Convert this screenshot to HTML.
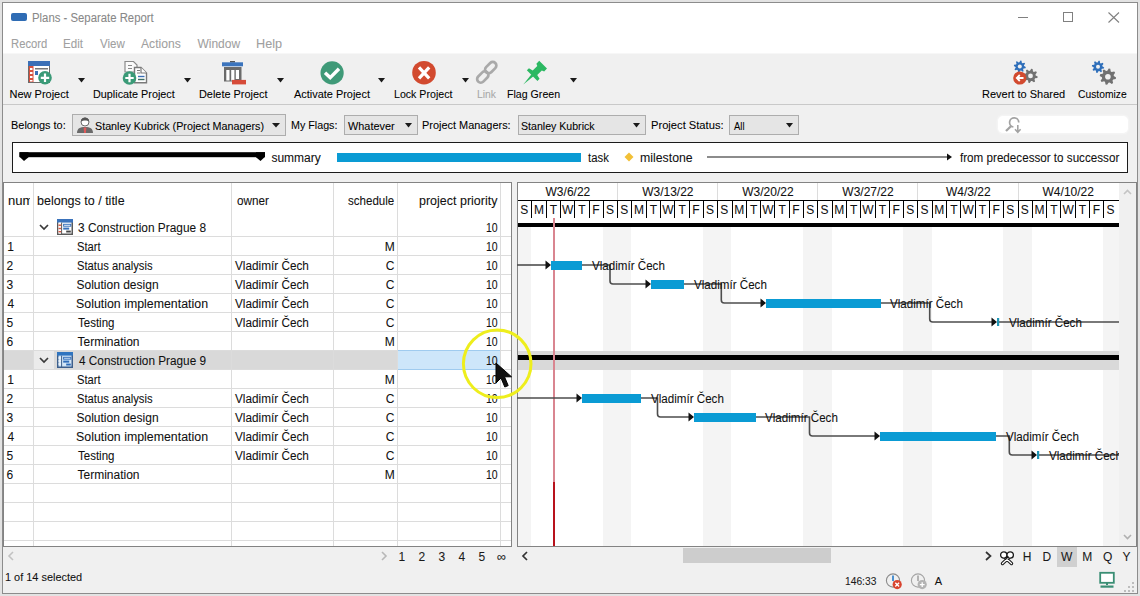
<!DOCTYPE html>
<html><head><meta charset="utf-8"><style>
html,body{margin:0;padding:0;}
body{width:1140px;height:596px;position:relative;overflow:hidden;font-family:"Liberation Sans",sans-serif;background:#e3e3e3;}
.t{position:absolute;white-space:nowrap;line-height:normal;transform-origin:0 0;-webkit-text-stroke:0.07px currentColor;}
.r{position:absolute;display:block;}
</style></head><body>
<div class="r" style="left:0px;top:0px;width:1140px;height:596px;background:#e3e3e3;"></div>
<div class="r" style="left:2px;top:2px;width:1136px;height:592px;background:#8c8c8c;"></div>
<div class="r" style="left:3px;top:3px;width:1134px;height:590px;background:#f0f0f0;"></div>
<div class="r" style="left:3px;top:3px;width:1134px;height:51px;background:#ffffff;"></div>
<div class="r" style="left:11px;top:13px;width:16px;height:8px;background:#2f6cb4;border-radius:2px;"></div>
<div class="t" style="left:32.05px;top:11px;font-size:12px;color:#888888;transform:scaleX(0.9453);">Plans - Separate Report</div>
<div class="r" style="left:1018px;top:17px;width:10px;height:1px;background:#808080;"></div>
<div class="r" style="left:1063px;top:12px;width:10px;height:10px;background:transparent;border:1px solid #808080;box-sizing:border-box;"></div>
<svg class="r" style="left:1108px;top:12px;" width="12" height="11" viewBox="0 0 12 11"><path d="M0.5 0.5L11 10.5M11 0.5L0.5 10.5" stroke="#808080" stroke-width="1.1"/></svg>
<div class="t" style="left:10.66px;top:37px;font-size:12px;color:#a0a0a0;transform:scaleX(0.9378);">Record</div>
<div class="t" style="left:63.44px;top:37px;font-size:12px;color:#a0a0a0;transform:scaleX(0.9650);">Edit</div>
<div class="t" style="left:100.00px;top:37px;font-size:12px;color:#a0a0a0;transform:scaleX(0.9615);">View</div>
<div class="t" style="left:141.20px;top:37px;font-size:12px;color:#a0a0a0;transform:scaleX(1.0103);">Actions</div>
<div class="t" style="left:197.40px;top:37px;font-size:12px;color:#a0a0a0;">Window</div>
<div class="t" style="left:256.14px;top:37px;font-size:12px;color:#a0a0a0;transform:scaleX(1.0565);">Help</div>
<div class="r" style="left:3px;top:53px;width:1134px;height:51px;background:#f0f0f0;"></div>
<div class="r" style="left:3px;top:53px;width:1134px;height:1px;background:#f7f7f7;"></div>
<div class="r" style="left:3px;top:104px;width:1134px;height:1px;background:#c9c9c9;"></div>
<svg class="r" style="left:24px;top:56px;" width="32" height="32" viewBox="0 0 32 32">
<rect x="4.5" y="5.5" width="21" height="21" fill="#fff" stroke="#6b6b6b" stroke-width="1"/>
<rect x="4" y="5" width="22" height="5" fill="#3b6fb6"/>
<rect x="5" y="10" width="4.5" height="16" fill="#d8513e"/>
<rect x="6" y="12" width="2.5" height="2" fill="#fff"/><rect x="6" y="16" width="2.5" height="2" fill="#fff"/><rect x="6" y="20" width="2.5" height="2" fill="#fff"/><rect x="6" y="24" width="2.5" height="1.5" fill="#fff"/>
<rect x="11" y="12" width="13" height="1.5" fill="#777"/>
<rect x="11" y="15" width="3" height="4" fill="#3b6fb6"/>
<circle cx="21" cy="21.8" r="6.8" fill="#3a9a77"/>
<path d="M21 17.5V26M16.8 21.8H25.2" stroke="#fff" stroke-width="2.2"/>
</svg>
<div class="t" style="left:9.50px;top:88px;font-size:11px;color:#000;">New Project</div>
<svg class="r" style="left:78px;top:78px;" width="8" height="5" viewBox="0 0 8 5"><path d="M0 0H7L3.5 4.5Z" fill="#1a1a1a"/></svg>
<svg class="r" style="left:119px;top:56px;" width="32" height="32" viewBox="0 0 32 32">
<path d="M6 5.5H14.5L18 9V16H6Z" fill="#fafafa" stroke="#8a8a8a" stroke-width="1.2"/>
<path d="M9 9.5h4M9 12.5h4" stroke="#8a8a8a" stroke-width="1.2"/>
<path d="M15.5 11.5H22L27.5 17V26.8H15.5Z" fill="#fff" stroke="#7a7a7a" stroke-width="1.4"/>
<path d="M22 11.5V17H27.5" fill="#fff" stroke="#7a7a7a" stroke-width="1.2"/>
<path d="M18 14.5h3M18 17h3" stroke="#7a7a7a" stroke-width="1.2"/>
<path d="M19 20.5h6.5" stroke="#3b6fb6" stroke-width="1.4"/>
<path d="M19 23.5h6.5" stroke="#3f6e64" stroke-width="1.4"/>
<circle cx="10.5" cy="22" r="6.8" fill="#3a9a77"/>
<path d="M10.5 17.8V26.2M6.3 22H14.7" stroke="#fff" stroke-width="2.2"/>
</svg>
<div class="t" style="left:93.02px;top:88px;font-size:11px;color:#000;transform:scaleX(0.9829);">Duplicate Project</div>
<svg class="r" style="left:184px;top:78px;" width="8" height="5" viewBox="0 0 8 5"><path d="M0 0H7L3.5 4.5Z" fill="#1a1a1a"/></svg>
<svg class="r" style="left:218px;top:56px;" width="32" height="32" viewBox="0 0 32 32">
<rect x="12" y="5" width="5" height="1.6" fill="#555"/>
<rect x="4" y="6.3" width="21" height="4" fill="#3b74bd"/>
<path d="M6 11H23.5V25.5H6Z" fill="#6b6b6b"/>
<rect x="8.3" y="14" width="3.2" height="10.5" fill="#fff"/>
<rect x="13.2" y="14" width="3.2" height="10.5" fill="#fff"/>
<rect x="17.8" y="14" width="3.2" height="9" fill="#fff"/>
<rect x="14" y="23.9" width="14" height="4.5" fill="#d64b39"/>
</svg>
<div class="t" style="left:198.61px;top:88px;font-size:11px;color:#000;transform:scaleX(0.9912);">Delete Project</div>
<svg class="r" style="left:277px;top:78px;" width="8" height="5" viewBox="0 0 8 5"><path d="M0 0H7L3.5 4.5Z" fill="#1a1a1a"/></svg>
<svg class="r" style="left:316px;top:56px;" width="32" height="32" viewBox="0 0 32 32">
<circle cx="16.1" cy="16.9" r="11.6" fill="#3f9a78"/>
<path d="M9 16.8L14.2 21.6L23 12.8" fill="none" stroke="#fff" stroke-width="3.4"/>
</svg>
<div class="t" style="left:293.50px;top:88px;font-size:11px;color:#000;transform:scaleX(0.9934);">Activate Project</div>
<svg class="r" style="left:378px;top:78px;" width="8" height="5" viewBox="0 0 8 5"><path d="M0 0H7L3.5 4.5Z" fill="#1a1a1a"/></svg>
<svg class="r" style="left:408px;top:56px;" width="32" height="32" viewBox="0 0 32 32">
<circle cx="16" cy="16.7" r="11.8" fill="#d24a2f"/>
<path d="M11 11.3L21.2 22.3M21.2 11.3L11 22.3" stroke="#fff" stroke-width="3.2"/>
</svg>
<div class="t" style="left:393.54px;top:88px;font-size:11px;color:#000;transform:scaleX(0.9650);">Lock Project</div>
<svg class="r" style="left:462px;top:78px;" width="8" height="5" viewBox="0 0 8 5"><path d="M0 0H7L3.5 4.5Z" fill="#1a1a1a"/></svg>
<svg class="r" style="left:470px;top:56px;" width="32" height="32" viewBox="0 0 32 32">
<g fill="none" stroke="#a9a9a9" stroke-width="2.7">
<rect x="14.2" y="8" width="13" height="7.2" rx="3.6" transform="rotate(-45 20.7 11.6)"/>
<rect x="6.3" y="17.4" width="13" height="7.2" rx="3.6" transform="rotate(-45 12.8 21)"/>
</g>
</svg>
<div class="t" style="left:476.56px;top:88px;font-size:11px;color:#a8a8a8;transform:scaleX(0.9421);">Link</div>
<svg class="r" style="left:519px;top:56px;" width="32" height="32" viewBox="0 0 32 32">
<polygon points="7.84,14.36 9.96,12.24 13.70,14.57 18.30,9.97 17.38,7.64 20.21,4.81 27.99,12.59 25.16,15.42 22.83,14.50 18.23,19.10 20.56,22.84 18.44,24.96" fill="#2cb862"/>
<polygon points="4.30,28.50 12.50,18.32 14.48,20.30" fill="#2cb862"/>
</svg>
<div class="t" style="left:507.44px;top:88px;font-size:11px;color:#000;transform:scaleX(0.9648);">Flag Green</div>
<svg class="r" style="left:570px;top:78px;" width="8" height="5" viewBox="0 0 8 5"><path d="M0 0H7L3.5 4.5Z" fill="#1a1a1a"/></svg>
<svg class="r" style="left:1009px;top:56px;" width="32" height="32" viewBox="0 0 32 32"><polygon points="11.39,4.53 12.54,4.76 12.83,6.71 13.53,7.18 15.44,6.69 16.09,7.67 14.91,9.25 15.08,10.08 16.77,11.09 16.54,12.24 14.59,12.53 14.12,13.23 14.61,15.14 13.63,15.79 12.05,14.61 11.22,14.78 10.21,16.47 9.06,16.24 8.77,14.29 8.07,13.82 6.16,14.31 5.51,13.33 6.69,11.75 6.52,10.92 4.83,9.91 5.06,8.76 7.01,8.47 7.48,7.77 6.99,5.86 7.97,5.21 9.55,6.39 10.38,6.22" fill="#2f6fba"/><circle cx="10.8" cy="10.5" r="2.0" fill="#f0f0f0"/><polygon points="22.21,12.73 23.59,13.01 23.95,15.31 24.80,15.88 27.07,15.33 27.85,16.51 26.48,18.39 26.67,19.39 28.67,20.61 28.39,21.99 26.09,22.35 25.52,23.20 26.07,25.47 24.89,26.25 23.01,24.88 22.01,25.07 20.79,27.07 19.41,26.79 19.05,24.49 18.20,23.92 15.93,24.47 15.15,23.29 16.52,21.41 16.33,20.41 14.33,19.19 14.61,17.81 16.91,17.45 17.48,16.60 16.93,14.33 18.11,13.55 19.99,14.92 20.99,14.73" fill="#717171"/><circle cx="21.5" cy="19.9" r="2.4" fill="#f0f0f0"/>
<circle cx="10.8" cy="22" r="6.6" fill="#d24a2f"/>
<path d="M14.5 22H7.8M10.8 19L7.8 22L10.8 25" fill="none" stroke="#fff" stroke-width="1.8"/>
</svg>
<div class="t" style="left:982.00px;top:88px;font-size:11px;color:#000;">Revert to Shared</div>
<svg class="r" style="left:1088px;top:56px;" width="32" height="32" viewBox="0 0 32 32"><polygon points="10.61,4.63 11.80,4.87 12.07,6.92 12.79,7.40 14.79,6.87 15.47,7.88 14.21,9.52 14.38,10.37 16.17,11.41 15.93,12.60 13.88,12.87 13.40,13.59 13.93,15.59 12.92,16.27 11.28,15.01 10.43,15.18 9.39,16.97 8.20,16.73 7.93,14.68 7.21,14.20 5.21,14.73 4.53,13.72 5.79,12.08 5.62,11.23 3.83,10.19 4.07,9.00 6.12,8.73 6.60,8.01 6.07,6.01 7.08,5.33 8.72,6.59 9.57,6.42" fill="#2f6fba"/><circle cx="10" cy="10.8" r="2.0" fill="#f0f0f0"/><polygon points="20.70,12.54 22.28,12.85 22.73,15.41 23.71,16.06 26.24,15.50 27.13,16.83 25.64,18.96 25.87,20.11 28.06,21.50 27.75,23.08 25.19,23.53 24.54,24.51 25.10,27.04 23.77,27.93 21.64,26.44 20.49,26.67 19.10,28.86 17.52,28.55 17.07,25.99 16.09,25.34 13.56,25.90 12.67,24.57 14.16,22.44 13.93,21.29 11.74,19.90 12.05,18.32 14.61,17.87 15.26,16.89 14.70,14.36 16.03,13.47 18.16,14.96 19.31,14.73" fill="#717171"/><circle cx="19.9" cy="20.7" r="2.8" fill="#f0f0f0"/></svg>
<div class="t" style="left:1078.06px;top:88px;font-size:11px;color:#000;transform:scaleX(0.9353);">Customize</div>
<div class="t" style="left:10.81px;top:119px;font-size:11px;color:#000;transform:scaleX(0.9943);">Belongs to:</div>
<div class="r" style="left:72px;top:114px;width:214px;height:22px;background:#e5e5e5;border:1px solid #adadad;box-sizing:border-box;"></div>
<svg class="r" style="left:75px;top:116px;" width="20" height="18" viewBox="0 0 20 18">
<path d="M2 17C2 12.5 5 11 10 11S18 12.5 18 17Z" fill="#6a6a6a"/>
<path d="M8.6 11.5L11.4 11.5L10.9 17L9.1 17Z" fill="#e05a5a"/>
<circle cx="10" cy="6" r="4" fill="#fff" stroke="#6a6a6a" stroke-width="1"/>
<path d="M6 5.5C6 2.5 8 1.5 10 1.5S14 2.5 14 5.5C12.5 4 8 4 6 5.5Z" fill="#555"/>
</svg>
<div class="t" style="left:95.02px;top:120px;font-size:11px;color:#000;transform:scaleX(0.9766);">Stanley Kubrick (Project Managers)</div>
<svg class="r" style="left:272px;top:123px;" width="9" height="5" viewBox="0 0 9 5"><path d="M0 0H8L4 4.5Z" fill="#1a1a1a"/></svg>
<div class="t" style="left:290.83px;top:119px;font-size:11px;color:#000;transform:scaleX(0.9739);">My Flags:</div>
<div class="r" style="left:344px;top:115px;width:74px;height:20px;background:#e5e5e5;border:1px solid #adadad;box-sizing:border-box;"></div>
<div class="t" style="left:348.00px;top:120px;font-size:11px;color:#000;transform:scaleX(0.9894);">Whatever</div>
<svg class="r" style="left:405px;top:123px;" width="8" height="5" viewBox="0 0 8 5"><path d="M0 0H7L3.5 4.5Z" fill="#1a1a1a"/></svg>
<div class="t" style="left:422.41px;top:119px;font-size:11px;color:#000;transform:scaleX(0.9932);">Project Managers:</div>
<div class="r" style="left:518px;top:115px;width:128px;height:20px;background:#e5e5e5;border:1px solid #adadad;box-sizing:border-box;"></div>
<div class="t" style="left:520.84px;top:120px;font-size:11px;color:#000;transform:scaleX(0.9627);">Stanley Kubrick</div>
<svg class="r" style="left:633px;top:123px;" width="8" height="5" viewBox="0 0 8 5"><path d="M0 0H7L3.5 4.5Z" fill="#1a1a1a"/></svg>
<div class="t" style="left:650.59px;top:119px;font-size:11px;color:#000;transform:scaleX(1.0143);">Project Status:</div>
<div class="r" style="left:729px;top:115px;width:70px;height:20px;background:#e5e5e5;border:1px solid #adadad;box-sizing:border-box;"></div>
<div class="t" style="left:733.70px;top:120px;font-size:11px;color:#000;transform:scaleX(0.8583);">All</div>
<svg class="r" style="left:786px;top:123px;" width="8" height="5" viewBox="0 0 8 5"><path d="M0 0H7L3.5 4.5Z" fill="#1a1a1a"/></svg>
<div class="r" style="left:998px;top:116px;width:130px;height:17px;background:#ffffff;border-radius:5px;box-shadow:0 0 1.5px 0.5px #f6f6f6;"></div>
<svg class="r" style="left:1002px;top:114px;" width="24" height="22" viewBox="0 0 24 22">
<path d="M16.8 8.5A4.6 4.6 0 1 0 11.4 13.03" fill="none" stroke="#a3a3a3" stroke-width="1.7"/>
<path d="M9.2 12L4 17" stroke="#a3a3a3" stroke-width="2.3"/>
<path d="M15.8 11V18.2M13 15.3L15.8 18.3L18.6 15.3" fill="none" stroke="#a3a3a3" stroke-width="1.6"/>
</svg>
<div class="r" style="left:12px;top:142px;width:1116px;height:31px;background:#ffffff;border:1px solid #1c1c1c;box-sizing:border-box;"></div>
<svg class="r" style="left:18px;top:150px;" width="250" height="13" viewBox="0 0 250 13">
<rect x="1.5" y="2.2" width="245.5" height="5" fill="#000"/>
<path d="M1.5 2.2H10.5V7.2L6 11L1.5 6.8Z" fill="#000"/>
<path d="M247 2.2V6.8L242.5 11L238 7.2V2.2Z" fill="#000"/>
</svg>
<div class="t" style="left:271.40px;top:151px;font-size:12px;color:#111;">summary</div>
<div class="r" style="left:337px;top:153px;width:244px;height:9px;background:#0a9bd4;"></div>
<div class="t" style="left:588.00px;top:151px;font-size:12px;color:#111;transform:scaleX(0.9455);">task</div>
<svg class="r" style="left:623px;top:151px;" width="12" height="12" viewBox="0 0 12 12"><path d="M6 1.5L10.5 6L6 10.5L1.5 6Z" fill="#f2c037"/></svg>
<div class="t" style="left:639.67px;top:151px;font-size:12px;color:#111;transform:scaleX(1.0260);">milestone</div>
<svg class="r" style="left:706px;top:152px;" width="248" height="10" viewBox="0 0 248 10"><path d="M1 5H243" stroke="#666" stroke-width="1.6"/><path d="M241 1.5L246 5L241 8.5Z" fill="#111"/></svg>
<div class="t" style="left:959.60px;top:151px;font-size:12px;color:#111;transform:scaleX(0.9707);">from predecessor to successor</div>
<div class="r" style="left:3px;top:182px;width:509px;height:365px;background:#ffffff;border:1px solid #838383;box-sizing:border-box;"></div>
<div class="r" style="left:4px;top:236px;width:507px;height:1px;background:#dcdcdc;"></div>
<div class="r" style="left:4px;top:255px;width:507px;height:1px;background:#dcdcdc;"></div>
<div class="r" style="left:4px;top:274px;width:507px;height:1px;background:#dcdcdc;"></div>
<div class="r" style="left:4px;top:293px;width:507px;height:1px;background:#dcdcdc;"></div>
<div class="r" style="left:4px;top:312px;width:507px;height:1px;background:#dcdcdc;"></div>
<div class="r" style="left:4px;top:331px;width:507px;height:1px;background:#dcdcdc;"></div>
<div class="r" style="left:4px;top:350px;width:507px;height:1px;background:#dcdcdc;"></div>
<div class="r" style="left:4px;top:369px;width:507px;height:1px;background:#dcdcdc;"></div>
<div class="r" style="left:4px;top:388px;width:507px;height:1px;background:#dcdcdc;"></div>
<div class="r" style="left:4px;top:407px;width:507px;height:1px;background:#dcdcdc;"></div>
<div class="r" style="left:4px;top:426px;width:507px;height:1px;background:#dcdcdc;"></div>
<div class="r" style="left:4px;top:445px;width:507px;height:1px;background:#dcdcdc;"></div>
<div class="r" style="left:4px;top:464px;width:507px;height:1px;background:#dcdcdc;"></div>
<div class="r" style="left:4px;top:483px;width:507px;height:1px;background:#dcdcdc;"></div>
<div class="r" style="left:4px;top:502px;width:507px;height:1px;background:#dcdcdc;"></div>
<div class="r" style="left:4px;top:521px;width:507px;height:1px;background:#dcdcdc;"></div>
<div class="r" style="left:4px;top:540px;width:507px;height:1px;background:#dcdcdc;"></div>
<div class="r" style="left:4px;top:351px;width:496px;height:18px;background:#d9d9d9;"></div>
<div class="r" style="left:34px;top:351px;width:20px;height:18px;background:#ebebeb;"></div>
<div class="r" style="left:397px;top:350px;width:104px;height:20px;background:#cde6fa;border-top:1px solid #9fcbef;border-bottom:1px solid #9fcbef;box-sizing:border-box;"></div>
<div class="r" style="left:33px;top:183px;width:1px;height:363px;background:#dcdcdc;"></div>
<div class="r" style="left:231px;top:183px;width:1px;height:363px;background:#dcdcdc;"></div>
<div class="r" style="left:333px;top:183px;width:1px;height:363px;background:#dcdcdc;"></div>
<div class="r" style="left:397px;top:183px;width:1px;height:363px;background:#dcdcdc;"></div>
<div class="r" style="left:500px;top:183px;width:1px;height:363px;background:#dcdcdc;"></div>
<div class="r" style="left:4px;top:183px;width:26px;height:30px;overflow:hidden;">
<div class="t" style="left:3.61px;top:11px;font-size:12px;color:#111;transform:scaleX(1.0909);">num</div>
</div>
<div class="t" style="left:37.46px;top:194px;font-size:12px;color:#111;transform:scaleX(1.0422);">belongs to / title</div>
<div class="t" style="left:236.70px;top:194px;font-size:12px;color:#111;transform:scaleX(0.9788);">owner</div>
<div class="t" style="left:347.50px;top:194px;font-size:12px;color:#111;transform:scaleX(0.9625);">schedule</div>
<div class="t" style="left:418.96px;top:194px;font-size:12px;color:#111;transform:scaleX(1.0405);">project priority</div>
<svg class="r" style="left:38.5px;top:223.5px;" width="10" height="7" viewBox="0 0 10 7"><path d="M1 1L5 5L9 1" fill="none" stroke="#3a3a3a" stroke-width="1.7"/></svg>
<svg class="r" style="left:57px;top:219px;" width="16" height="16" viewBox="0 0 16 16">
<rect x="0.75" y="0.75" width="14.5" height="14.5" fill="#fff" stroke="#5a5a5a" stroke-width="1.5"/>
<rect x="0" y="0" width="16" height="3.6" fill="#3a72bb"/>
<rect x="1.5" y="3.6" width="2.6" height="11" fill="#fff"/>
<rect x="1.5" y="5.5" width="2.6" height="1.4" fill="#d8553f"/><rect x="1.5" y="8.8" width="2.6" height="1.4" fill="#d8553f"/><rect x="1.5" y="12" width="2.6" height="1.4" fill="#d8553f"/>
<rect x="4.1" y="3.6" width="1" height="11.5" fill="#5a5a5a"/>
<rect x="6.6" y="5.3" width="7.2" height="1.9" fill="none" stroke="#3a72bb" stroke-width="1"/>
<rect x="6.2" y="8.6" width="6" height="2" fill="#3a72bb"/>
<rect x="9.2" y="11.6" width="4.6" height="1.9" fill="#444"/>
</svg>
<div class="t" style="left:78.41px;top:221px;font-size:12px;color:#111;transform:scaleX(0.9891);">3 Construction Prague 8</div>
<div class="t" style="left:485.62px;top:221px;font-size:12px;color:#111;transform:scaleX(0.8750);">10</div>
<div class="t" style="left:7.30px;top:240px;font-size:12px;color:#111;">1</div>
<div class="t" style="left:76.57px;top:240px;font-size:12px;color:#111;transform:scaleX(0.9333);">Start</div>
<div class="t" style="left:384.70px;top:240px;font-size:12px;color:#111;">M</div>
<div class="t" style="left:485.62px;top:240px;font-size:12px;color:#111;transform:scaleX(0.8750);">10</div>
<div class="t" style="left:6.60px;top:259px;font-size:12px;color:#111;">2</div>
<div class="t" style="left:76.56px;top:259px;font-size:12px;color:#111;transform:scaleX(0.9354);">Status analysis</div>
<div class="t" style="left:235.10px;top:259px;font-size:12px;color:#111;transform:scaleX(0.9800);">Vladimír Čech</div>
<div class="t" style="left:385.70px;top:259px;font-size:12px;color:#111;">C</div>
<div class="t" style="left:485.62px;top:259px;font-size:12px;color:#111;transform:scaleX(0.8750);">10</div>
<div class="t" style="left:6.60px;top:278px;font-size:12px;color:#111;">3</div>
<div class="t" style="left:76.50px;top:278px;font-size:12px;color:#111;">Solution design</div>
<div class="t" style="left:235.10px;top:278px;font-size:12px;color:#111;transform:scaleX(0.9800);">Vladimír Čech</div>
<div class="t" style="left:385.70px;top:278px;font-size:12px;color:#111;">C</div>
<div class="t" style="left:485.62px;top:278px;font-size:12px;color:#111;transform:scaleX(0.8750);">10</div>
<div class="t" style="left:7.60px;top:297px;font-size:12px;color:#111;">4</div>
<div class="t" style="left:76.47px;top:297px;font-size:12px;color:#111;transform:scaleX(1.0307);">Solution implementation</div>
<div class="t" style="left:235.10px;top:297px;font-size:12px;color:#111;transform:scaleX(0.9800);">Vladimír Čech</div>
<div class="t" style="left:385.70px;top:297px;font-size:12px;color:#111;">C</div>
<div class="t" style="left:485.62px;top:297px;font-size:12px;color:#111;transform:scaleX(0.8750);">10</div>
<div class="t" style="left:6.60px;top:316px;font-size:12px;color:#111;">5</div>
<div class="t" style="left:77.50px;top:316px;font-size:12px;color:#111;transform:scaleX(0.9595);">Testing</div>
<div class="t" style="left:235.10px;top:316px;font-size:12px;color:#111;transform:scaleX(0.9800);">Vladimír Čech</div>
<div class="t" style="left:385.70px;top:316px;font-size:12px;color:#111;">C</div>
<div class="t" style="left:485.62px;top:316px;font-size:12px;color:#111;transform:scaleX(0.8750);">10</div>
<div class="t" style="left:6.60px;top:335px;font-size:12px;color:#111;">6</div>
<div class="t" style="left:77.50px;top:335px;font-size:12px;color:#111;">Termination</div>
<div class="t" style="left:384.70px;top:335px;font-size:12px;color:#111;">M</div>
<div class="t" style="left:485.62px;top:335px;font-size:12px;color:#111;transform:scaleX(0.8750);">10</div>
<svg class="r" style="left:38.5px;top:356.5px;" width="10" height="7" viewBox="0 0 10 7"><path d="M1 1L5 5L9 1" fill="none" stroke="#3a3a3a" stroke-width="1.7"/></svg>
<svg class="r" style="left:57px;top:352px;" width="16" height="16" viewBox="0 0 16 16">
<rect x="0.75" y="0.75" width="14.5" height="14.5" fill="#d3e6f7" stroke="#3d5f8c" stroke-width="1.5"/>
<rect x="0" y="0" width="16" height="3.6" fill="#2f74c0"/>
<rect x="4.1" y="3.6" width="1" height="11.5" fill="#3d5f8c"/>
<rect x="1.6" y="5" width="2.2" height="2" fill="#eaf3fb"/><rect x="1.6" y="8" width="2.2" height="2" fill="#eaf3fb"/><rect x="1.6" y="11" width="2.2" height="2" fill="#eaf3fb"/>
<rect x="6.6" y="5.3" width="7.2" height="1.9" fill="none" stroke="#3a72bb" stroke-width="1"/>
<rect x="6.2" y="8.6" width="6" height="2" fill="#2f6cb8"/>
<rect x="9.2" y="11.6" width="4.6" height="1.9" fill="#2f6cb8"/>
</svg>
<div class="t" style="left:79.40px;top:354px;font-size:12px;color:#111;transform:scaleX(0.9814);">4 Construction Prague 9</div>
<div class="t" style="left:485.62px;top:354px;font-size:12px;color:#111;transform:scaleX(0.8750);">10</div>
<div class="t" style="left:7.30px;top:373px;font-size:12px;color:#111;">1</div>
<div class="t" style="left:76.57px;top:373px;font-size:12px;color:#111;transform:scaleX(0.9333);">Start</div>
<div class="t" style="left:384.70px;top:373px;font-size:12px;color:#111;">M</div>
<div class="t" style="left:485.62px;top:373px;font-size:12px;color:#111;transform:scaleX(0.8750);">10</div>
<div class="t" style="left:6.60px;top:392px;font-size:12px;color:#111;">2</div>
<div class="t" style="left:76.56px;top:392px;font-size:12px;color:#111;transform:scaleX(0.9354);">Status analysis</div>
<div class="t" style="left:235.10px;top:392px;font-size:12px;color:#111;transform:scaleX(0.9800);">Vladimír Čech</div>
<div class="t" style="left:385.70px;top:392px;font-size:12px;color:#111;">C</div>
<div class="t" style="left:485.62px;top:392px;font-size:12px;color:#111;transform:scaleX(0.8750);">10</div>
<div class="t" style="left:6.60px;top:411px;font-size:12px;color:#111;">3</div>
<div class="t" style="left:76.50px;top:411px;font-size:12px;color:#111;">Solution design</div>
<div class="t" style="left:235.10px;top:411px;font-size:12px;color:#111;transform:scaleX(0.9800);">Vladimír Čech</div>
<div class="t" style="left:385.70px;top:411px;font-size:12px;color:#111;">C</div>
<div class="t" style="left:485.62px;top:411px;font-size:12px;color:#111;transform:scaleX(0.8750);">10</div>
<div class="t" style="left:7.60px;top:430px;font-size:12px;color:#111;">4</div>
<div class="t" style="left:76.47px;top:430px;font-size:12px;color:#111;transform:scaleX(1.0307);">Solution implementation</div>
<div class="t" style="left:235.10px;top:430px;font-size:12px;color:#111;transform:scaleX(0.9800);">Vladimír Čech</div>
<div class="t" style="left:385.70px;top:430px;font-size:12px;color:#111;">C</div>
<div class="t" style="left:485.62px;top:430px;font-size:12px;color:#111;transform:scaleX(0.8750);">10</div>
<div class="t" style="left:6.60px;top:449px;font-size:12px;color:#111;">5</div>
<div class="t" style="left:77.50px;top:449px;font-size:12px;color:#111;transform:scaleX(0.9595);">Testing</div>
<div class="t" style="left:235.10px;top:449px;font-size:12px;color:#111;transform:scaleX(0.9800);">Vladimír Čech</div>
<div class="t" style="left:385.70px;top:449px;font-size:12px;color:#111;">C</div>
<div class="t" style="left:485.62px;top:449px;font-size:12px;color:#111;transform:scaleX(0.8750);">10</div>
<div class="t" style="left:6.60px;top:468px;font-size:12px;color:#111;">6</div>
<div class="t" style="left:77.50px;top:468px;font-size:12px;color:#111;">Termination</div>
<div class="t" style="left:384.70px;top:468px;font-size:12px;color:#111;">M</div>
<div class="t" style="left:485.62px;top:468px;font-size:12px;color:#111;transform:scaleX(0.8750);">10</div>
<div class="r" style="left:517px;top:182px;width:620px;height:365px;background:#ffffff;border:1px solid #838383;box-sizing:border-box;"></div>
<div class="r" style="left:1119px;top:183px;width:17px;height:363px;background:#f0f0f0;"></div>
<svg class="r" style="left:1123px;top:189px;" width="9" height="6" viewBox="0 0 9 6"><path d="M1 5L4.5 1.5L8 5" fill="none" stroke="#c4c4c4" stroke-width="1.6"/></svg>
<svg class="r" style="left:1123px;top:534px;" width="9" height="6" viewBox="0 0 9 6"><path d="M1 1L4.5 4.5L8 1" fill="none" stroke="#b0b0b0" stroke-width="1.6"/></svg>
<div class="r" style="left:518.00px;top:227px;width:13.30px;height:319px;background:#f4f4f4;"></div>
<div class="r" style="left:602.80px;top:227px;width:28.60px;height:319px;background:#f4f4f4;"></div>
<div class="r" style="left:702.90px;top:227px;width:28.60px;height:319px;background:#f4f4f4;"></div>
<div class="r" style="left:803.00px;top:227px;width:28.60px;height:319px;background:#f4f4f4;"></div>
<div class="r" style="left:903.10px;top:227px;width:28.60px;height:319px;background:#f4f4f4;"></div>
<div class="r" style="left:1003.20px;top:227px;width:28.60px;height:319px;background:#f4f4f4;"></div>
<div class="r" style="left:1103.30px;top:227px;width:15.70px;height:319px;background:#f4f4f4;"></div>
<div class="r" style="left:518px;top:351px;width:601px;height:19px;background:#d9d9d9;"></div>
<div class="r" style="left:518px;top:183px;width:601px;height:35px;background:#ffffff;"></div>
<div class="r" style="left:518px;top:200px;width:601px;height:1px;background:#000;"></div>
<div class="r" style="left:617.10px;top:183px;width:1px;height:17px;background:#dcdcdc;"></div>
<div class="r" style="left:717.20px;top:183px;width:1px;height:17px;background:#dcdcdc;"></div>
<div class="r" style="left:817.30px;top:183px;width:1px;height:17px;background:#dcdcdc;"></div>
<div class="r" style="left:917.40px;top:183px;width:1px;height:17px;background:#dcdcdc;"></div>
<div class="r" style="left:1017.50px;top:183px;width:1px;height:17px;background:#dcdcdc;"></div>
<div class="t" style="left:545.55px;top:185px;font-size:12px;color:#111;">W3/6/22</div>
<div class="t" style="left:642.15px;top:185px;font-size:12px;color:#111;">W3/13/22</div>
<div class="t" style="left:742.25px;top:185px;font-size:12px;color:#111;">W3/20/22</div>
<div class="t" style="left:842.35px;top:185px;font-size:12px;color:#111;">W3/27/22</div>
<div class="t" style="left:945.95px;top:185px;font-size:12px;color:#111;">W4/3/22</div>
<div class="t" style="left:1042.55px;top:185px;font-size:12px;color:#111;">W4/10/22</div>
<div class="t" style="left:520.15px;top:203px;font-size:12px;color:#111;">S</div>
<div class="r" style="left:531.30px;top:200px;width:1px;height:18px;background:#000;"></div>
<div class="t" style="left:533.95px;top:203px;font-size:12px;color:#111;">M</div>
<div class="r" style="left:545.60px;top:200px;width:1px;height:18px;background:#000;"></div>
<div class="t" style="left:549.75px;top:203px;font-size:12px;color:#111;">T</div>
<div class="r" style="left:559.90px;top:200px;width:1px;height:18px;background:#000;"></div>
<div class="t" style="left:562.05px;top:203px;font-size:12px;color:#111;">W</div>
<div class="r" style="left:574.20px;top:200px;width:1px;height:18px;background:#000;"></div>
<div class="t" style="left:578.35px;top:203px;font-size:12px;color:#111;">T</div>
<div class="r" style="left:588.50px;top:200px;width:1px;height:18px;background:#000;"></div>
<div class="t" style="left:592.15px;top:203px;font-size:12px;color:#111;">F</div>
<div class="r" style="left:602.80px;top:200px;width:1px;height:18px;background:#000;"></div>
<div class="t" style="left:605.95px;top:203px;font-size:12px;color:#111;">S</div>
<div class="r" style="left:617.10px;top:200px;width:1px;height:18px;background:#000;"></div>
<div class="t" style="left:620.25px;top:203px;font-size:12px;color:#111;">S</div>
<div class="r" style="left:631.40px;top:200px;width:1px;height:18px;background:#000;"></div>
<div class="t" style="left:634.05px;top:203px;font-size:12px;color:#111;">M</div>
<div class="r" style="left:645.70px;top:200px;width:1px;height:18px;background:#000;"></div>
<div class="t" style="left:649.85px;top:203px;font-size:12px;color:#111;">T</div>
<div class="r" style="left:660.00px;top:200px;width:1px;height:18px;background:#000;"></div>
<div class="t" style="left:662.15px;top:203px;font-size:12px;color:#111;">W</div>
<div class="r" style="left:674.30px;top:200px;width:1px;height:18px;background:#000;"></div>
<div class="t" style="left:678.45px;top:203px;font-size:12px;color:#111;">T</div>
<div class="r" style="left:688.60px;top:200px;width:1px;height:18px;background:#000;"></div>
<div class="t" style="left:692.25px;top:203px;font-size:12px;color:#111;">F</div>
<div class="r" style="left:702.90px;top:200px;width:1px;height:18px;background:#000;"></div>
<div class="t" style="left:706.05px;top:203px;font-size:12px;color:#111;">S</div>
<div class="r" style="left:717.20px;top:200px;width:1px;height:18px;background:#000;"></div>
<div class="t" style="left:720.35px;top:203px;font-size:12px;color:#111;">S</div>
<div class="r" style="left:731.50px;top:200px;width:1px;height:18px;background:#000;"></div>
<div class="t" style="left:734.15px;top:203px;font-size:12px;color:#111;">M</div>
<div class="r" style="left:745.80px;top:200px;width:1px;height:18px;background:#000;"></div>
<div class="t" style="left:749.95px;top:203px;font-size:12px;color:#111;">T</div>
<div class="r" style="left:760.10px;top:200px;width:1px;height:18px;background:#000;"></div>
<div class="t" style="left:762.25px;top:203px;font-size:12px;color:#111;">W</div>
<div class="r" style="left:774.40px;top:200px;width:1px;height:18px;background:#000;"></div>
<div class="t" style="left:778.55px;top:203px;font-size:12px;color:#111;">T</div>
<div class="r" style="left:788.70px;top:200px;width:1px;height:18px;background:#000;"></div>
<div class="t" style="left:792.35px;top:203px;font-size:12px;color:#111;">F</div>
<div class="r" style="left:803.00px;top:200px;width:1px;height:18px;background:#000;"></div>
<div class="t" style="left:806.15px;top:203px;font-size:12px;color:#111;">S</div>
<div class="r" style="left:817.30px;top:200px;width:1px;height:18px;background:#000;"></div>
<div class="t" style="left:820.45px;top:203px;font-size:12px;color:#111;">S</div>
<div class="r" style="left:831.60px;top:200px;width:1px;height:18px;background:#000;"></div>
<div class="t" style="left:834.25px;top:203px;font-size:12px;color:#111;">M</div>
<div class="r" style="left:845.90px;top:200px;width:1px;height:18px;background:#000;"></div>
<div class="t" style="left:850.05px;top:203px;font-size:12px;color:#111;">T</div>
<div class="r" style="left:860.20px;top:200px;width:1px;height:18px;background:#000;"></div>
<div class="t" style="left:862.35px;top:203px;font-size:12px;color:#111;">W</div>
<div class="r" style="left:874.50px;top:200px;width:1px;height:18px;background:#000;"></div>
<div class="t" style="left:878.65px;top:203px;font-size:12px;color:#111;">T</div>
<div class="r" style="left:888.80px;top:200px;width:1px;height:18px;background:#000;"></div>
<div class="t" style="left:892.45px;top:203px;font-size:12px;color:#111;">F</div>
<div class="r" style="left:903.10px;top:200px;width:1px;height:18px;background:#000;"></div>
<div class="t" style="left:906.25px;top:203px;font-size:12px;color:#111;">S</div>
<div class="r" style="left:917.40px;top:200px;width:1px;height:18px;background:#000;"></div>
<div class="t" style="left:920.55px;top:203px;font-size:12px;color:#111;">S</div>
<div class="r" style="left:931.70px;top:200px;width:1px;height:18px;background:#000;"></div>
<div class="t" style="left:934.35px;top:203px;font-size:12px;color:#111;">M</div>
<div class="r" style="left:946.00px;top:200px;width:1px;height:18px;background:#000;"></div>
<div class="t" style="left:950.15px;top:203px;font-size:12px;color:#111;">T</div>
<div class="r" style="left:960.30px;top:200px;width:1px;height:18px;background:#000;"></div>
<div class="t" style="left:962.45px;top:203px;font-size:12px;color:#111;">W</div>
<div class="r" style="left:974.60px;top:200px;width:1px;height:18px;background:#000;"></div>
<div class="t" style="left:978.75px;top:203px;font-size:12px;color:#111;">T</div>
<div class="r" style="left:988.90px;top:200px;width:1px;height:18px;background:#000;"></div>
<div class="t" style="left:992.55px;top:203px;font-size:12px;color:#111;">F</div>
<div class="r" style="left:1003.20px;top:200px;width:1px;height:18px;background:#000;"></div>
<div class="t" style="left:1006.35px;top:203px;font-size:12px;color:#111;">S</div>
<div class="r" style="left:1017.50px;top:200px;width:1px;height:18px;background:#000;"></div>
<div class="t" style="left:1020.65px;top:203px;font-size:12px;color:#111;">S</div>
<div class="r" style="left:1031.80px;top:200px;width:1px;height:18px;background:#000;"></div>
<div class="t" style="left:1034.45px;top:203px;font-size:12px;color:#111;">M</div>
<div class="r" style="left:1046.10px;top:200px;width:1px;height:18px;background:#000;"></div>
<div class="t" style="left:1050.25px;top:203px;font-size:12px;color:#111;">T</div>
<div class="r" style="left:1060.40px;top:200px;width:1px;height:18px;background:#000;"></div>
<div class="t" style="left:1062.55px;top:203px;font-size:12px;color:#111;">W</div>
<div class="r" style="left:1074.70px;top:200px;width:1px;height:18px;background:#000;"></div>
<div class="t" style="left:1078.85px;top:203px;font-size:12px;color:#111;">T</div>
<div class="r" style="left:1089.00px;top:200px;width:1px;height:18px;background:#000;"></div>
<div class="t" style="left:1092.65px;top:203px;font-size:12px;color:#111;">F</div>
<div class="r" style="left:1103.30px;top:200px;width:1px;height:18px;background:#000;"></div>
<div class="t" style="left:1106.45px;top:203px;font-size:12px;color:#111;">S</div>
<div class="r" style="left:518px;top:223px;width:601px;height:4px;background:#000;"></div>
<div class="r" style="left:518px;top:355px;width:601px;height:5px;background:#000;"></div>
<div class="r" style="left:553px;top:218px;width:2px;height:264px;background:#d98590;"></div>
<div class="r" style="left:553px;top:482px;width:2px;height:64px;background:#b8121c;"></div>
<svg class="r" style="left:517px;top:218px;" width="602" height="328" viewBox="0 0 602 328"><path d="M0 47H30" stroke="#4d4d4d" stroke-width="1.6"/><path d="M28.5 42.5L34 47L28.5 51.5Z" fill="#111"/><rect x="34" y="43" width="31" height="9" fill="#0a9bd4"/><path d="M65 47H93.0V63Q93 66 96 66H133" fill="none" stroke="#4d4d4d" stroke-width="1.6"/><path d="M128.5 61.5L134 66L128.5 70.5Z" fill="#111"/><rect x="134" y="62" width="33" height="9" fill="#0a9bd4"/><path d="M167 66H204.29999999999995V82Q204.29999999999995 85 207.29999999999995 85H248" fill="none" stroke="#4d4d4d" stroke-width="1.6"/><path d="M243.5 80.5L249 85L243.5 89.5Z" fill="#111"/><rect x="249" y="81" width="115" height="9" fill="#0a9bd4"/><path d="M364 85H412.70000000000005V101Q412.70000000000005 104 415.70000000000005 104H479" fill="none" stroke="#4d4d4d" stroke-width="1.6"/><path d="M474.5 99.5L480 104L474.5 108.5Z" fill="#111"/><path d="M480 104H602" stroke="#4d4d4d" stroke-width="1.6"/><rect x="480" y="100" width="2.2" height="8" fill="#1f95b5"/><path d="M0 180H60" stroke="#4d4d4d" stroke-width="1.6"/><path d="M59.5 175.5L65 180L59.5 184.5Z" fill="#111"/><rect x="65" y="176" width="59" height="9" fill="#0a9bd4"/><path d="M124 180H140.5V196Q140.5 199 143.5 199H176" fill="none" stroke="#4d4d4d" stroke-width="1.6"/><path d="M171.5 194.5L177 199L171.5 203.5Z" fill="#111"/><rect x="177" y="195" width="62" height="9" fill="#0a9bd4"/><path d="M239 199H292.5V215Q292.5 218 295.5 218H362" fill="none" stroke="#4d4d4d" stroke-width="1.6"/><path d="M357.5 213.5L363 218L357.5 222.5Z" fill="#111"/><rect x="363" y="214" width="116" height="9" fill="#0a9bd4"/><path d="M479 218H492.29999999999995V234Q492.29999999999995 237 495.29999999999995 237H519" fill="none" stroke="#4d4d4d" stroke-width="1.6"/><path d="M514.5 232.5L520 237L514.5 241.5Z" fill="#111"/><path d="M520 237H602" stroke="#4d4d4d" stroke-width="1.6"/><rect x="520" y="233" width="2.2" height="8" fill="#1f95b5"/></svg>
<div class="r" style="left:517px;top:218px;width:602px;height:328px;overflow:hidden;">
<div class="t" style="left:75.00px;top:41px;font-size:12px;color:#111;transform:scaleX(0.9667);">Vladimír Čech</div>
<div class="t" style="left:176.70px;top:60px;font-size:12px;color:#111;transform:scaleX(0.9667);">Vladimír Čech</div>
<div class="t" style="left:373.30px;top:79px;font-size:12px;color:#111;transform:scaleX(0.9667);">Vladimír Čech</div>
<div class="t" style="left:491.80px;top:98px;font-size:12px;color:#111;transform:scaleX(0.9667);">Vladimír Čech</div>
<div class="t" style="left:134.00px;top:174px;font-size:12px;color:#111;transform:scaleX(0.9667);">Vladimír Čech</div>
<div class="t" style="left:248.30px;top:193px;font-size:12px;color:#111;transform:scaleX(0.9667);">Vladimír Čech</div>
<div class="t" style="left:488.80px;top:212px;font-size:12px;color:#111;transform:scaleX(0.9667);">Vladimír Čech</div>
<div class="t" style="left:531.50px;top:231px;font-size:12px;color:#111;transform:scaleX(0.9667);">Vladimír Čech</div>
</div>
<svg class="r" style="left:7px;top:551px;" width="8" height="10" viewBox="0 0 8 10"><path d="M6 1L2 5L6 9" fill="none" stroke="#c2c2c2" stroke-width="1.6"/></svg>
<svg class="r" style="left:380px;top:551px;" width="8" height="10" viewBox="0 0 8 10"><path d="M2 1L6 5L2 9" fill="none" stroke="#b8b8b8" stroke-width="1.6"/></svg>
<div class="t" style="left:398.60px;top:550px;font-size:12px;color:#1a1a1a;">1</div>
<div class="t" style="left:418.50px;top:550px;font-size:12px;color:#1a1a1a;">2</div>
<div class="t" style="left:438.50px;top:550px;font-size:12px;color:#1a1a1a;">3</div>
<div class="t" style="left:458.50px;top:550px;font-size:12px;color:#1a1a1a;">4</div>
<div class="t" style="left:478.50px;top:550px;font-size:12px;color:#1a1a1a;">5</div>
<div class="t" style="left:497.25px;top:549px;font-size:13px;color:#1a1a1a;transform:scaleX(0.9667);">∞</div>
<svg class="r" style="left:521px;top:551px;" width="8" height="10" viewBox="0 0 8 10"><path d="M6 1L2 5L6 9" fill="none" stroke="#333" stroke-width="1.7"/></svg>
<div class="r" style="left:683px;top:548px;width:148px;height:15px;background:#cdcdcd;"></div>
<svg class="r" style="left:984px;top:551px;" width="9" height="10" viewBox="0 0 9 10"><path d="M2 1L6.5 5L2 9" fill="none" stroke="#333" stroke-width="1.7"/></svg>
<svg class="r" style="left:999px;top:550px;" width="16" height="16" viewBox="0 0 16 16">
<g stroke="#1a1a1a" stroke-width="3.4" stroke-linecap="round" fill="none">
<path d="M11 6.5L3.5 13.5M5 6.5L12.5 13.5"/>
</g>
<g stroke="#fff" stroke-width="1.2" stroke-linecap="round" fill="none">
<path d="M11 6.5L3.5 13.5M5 6.5L12.5 13.5"/>
</g>
<circle cx="4.8" cy="5" r="3.2" fill="#fff" stroke="#1a1a1a" stroke-width="1.3"/>
<circle cx="11.2" cy="5" r="3.2" fill="#fff" stroke="#1a1a1a" stroke-width="1.3"/>
<path d="M6.5 8.5L9.5 6.5" stroke="#1a1a1a" stroke-width="2"/>
</svg>
<div class="r" style="left:1057px;top:547px;width:20px;height:20px;background:#d0d0d0;"></div>
<div class="t" style="left:1022.70px;top:550px;font-size:12px;color:#1a1a1a;">H</div>
<div class="t" style="left:1042.60px;top:550px;font-size:12px;color:#1a1a1a;">D</div>
<div class="t" style="left:1061.10px;top:550px;font-size:12px;color:#1a1a1a;">W</div>
<div class="t" style="left:1082.20px;top:550px;font-size:12px;color:#1a1a1a;">M</div>
<div class="t" style="left:1103.00px;top:550px;font-size:12px;color:#1a1a1a;">Q</div>
<div class="t" style="left:1122.60px;top:550px;font-size:12px;color:#1a1a1a;">Y</div>
<div class="t" style="left:4.91px;top:571px;font-size:11px;color:#111;transform:scaleX(0.9934);">1 of 14 selected</div>
<div class="t" style="left:844.87px;top:575px;font-size:11px;color:#1a1a1a;transform:scaleX(0.9313);">146:33</div>
<svg class="r" style="left:884px;top:572px;" width="20" height="18" viewBox="0 0 20 18">
<circle cx="9" cy="8.5" r="6.6" fill="none" stroke="#8c8c8c" stroke-width="1.1"/>
<rect x="8" y="3.5" width="2" height="5.5" fill="#4a90d0"/>
<circle cx="13.2" cy="12.6" r="4.6" fill="#d9432f"/>
<path d="M11.3 10.7L15.1 14.5M15.1 10.7L11.3 14.5" stroke="#fff" stroke-width="1.3"/>
</svg>
<svg class="r" style="left:909px;top:572px;" width="20" height="18" viewBox="0 0 20 18">
<circle cx="9" cy="8.5" r="6.6" fill="none" stroke="#a5a5a5" stroke-width="1.1"/>
<rect x="8.2" y="3.5" width="1.6" height="5.5" fill="#a5a5a5"/>
<circle cx="13.2" cy="12.6" r="4.6" fill="#b3b3b3"/>
<path d="M13.2 10.2V15M10.8 12.6H15.6" stroke="#fff" stroke-width="1.3"/>
</svg>
<div class="t" style="left:934.70px;top:575px;font-size:11px;color:#111;">A</div>
<svg class="r" style="left:1098px;top:571px;" width="18" height="18" viewBox="0 0 18 18">
<rect x="2.2" y="1.8" width="13.6" height="10" fill="#fff" stroke="#3a8e74" stroke-width="1.8"/>
<rect x="8" y="12" width="2" height="2" fill="#3a8e74"/>
<rect x="2.5" y="14.5" width="13" height="2.2" fill="#3a8e74"/>
</svg>
<div class="r" style="left:1132px;top:582px;width:2px;height:2px;background:#bdbdbd;"></div>
<div class="r" style="left:1128px;top:586px;width:2px;height:2px;background:#bdbdbd;"></div>
<div class="r" style="left:1132px;top:586px;width:2px;height:2px;background:#bdbdbd;"></div>
<div class="r" style="left:1124px;top:590px;width:2px;height:2px;background:#bdbdbd;"></div>
<div class="r" style="left:1128px;top:590px;width:2px;height:2px;background:#bdbdbd;"></div>
<div class="r" style="left:1132px;top:590px;width:2px;height:2px;background:#bdbdbd;"></div>
<svg class="r" style="left:455px;top:322px;" width="84" height="84" viewBox="0 0 84 84"><circle cx="42.2" cy="41.8" r="33.8" fill="none" stroke="#eeee1c" stroke-width="3"/></svg>
<svg class="r" style="left:493px;top:360px;" width="22" height="32" viewBox="0 0 22 32"><path d="M3 3V23L8 18L11.8 27L15.2 25.6L11.5 16.8H18.5Z" fill="#111" stroke="#000" stroke-width="1" stroke-linejoin="round"/></svg>
</body></html>
